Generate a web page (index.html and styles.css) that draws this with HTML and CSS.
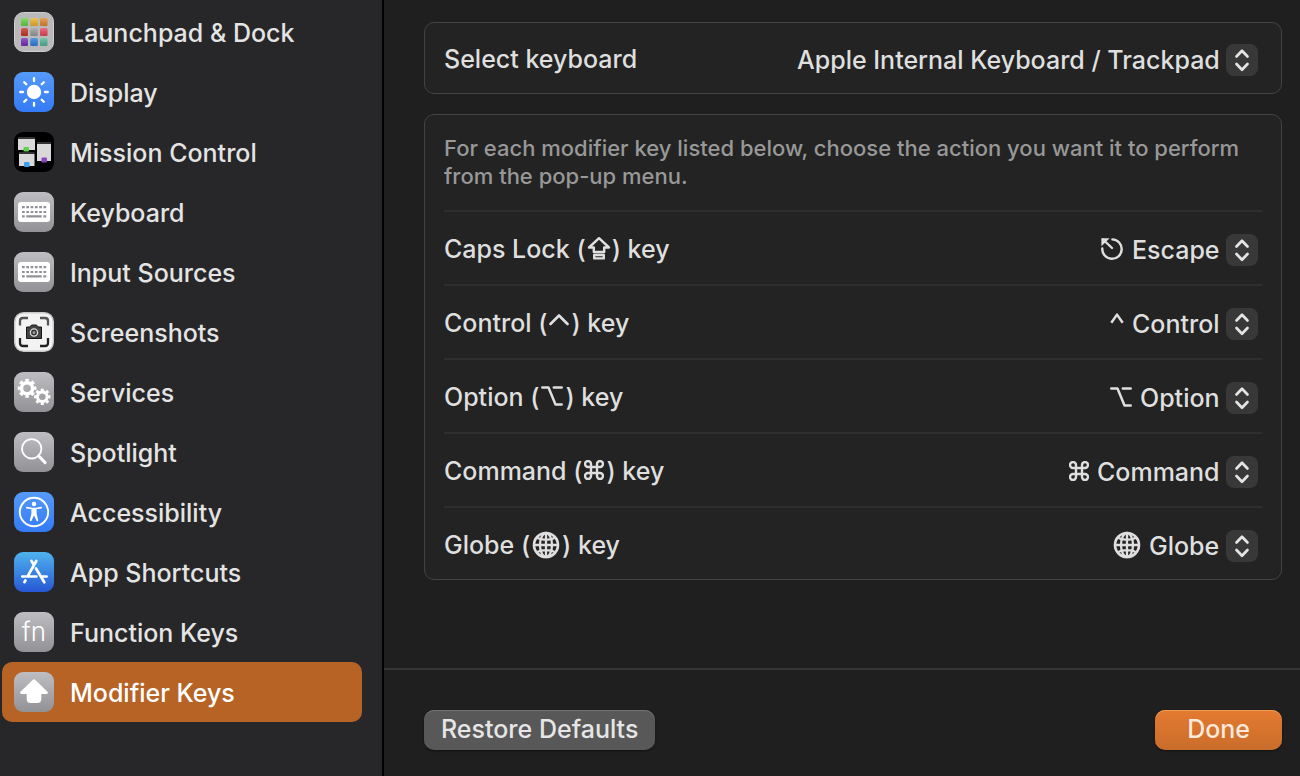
FILE: index.html
```html
<!DOCTYPE html>
<html lang="en">
<head>
<meta charset="utf-8">
<meta name="viewport" content="width=device-width, initial-scale=1">
<title>Modifier Keys</title>
<link rel="stylesheet" href="styles.css">
</head>
<body>
<svg class="defs" width="0" height="0" aria-hidden="true">
  <defs>
    <linearGradient id="g-gray" x1="0" y1="0" x2="0" y2="1"><stop offset="0" stop-color="#bebdc2"/><stop offset="1" stop-color="#929196"/></linearGradient>
    <linearGradient id="g-blue" x1="0" y1="0" x2="0" y2="1"><stop offset="0" stop-color="#559bf8"/><stop offset="1" stop-color="#347af5"/></linearGradient>
    <linearGradient id="g-store" x1="0" y1="0" x2="0" y2="1"><stop offset="0" stop-color="#4fb3ee"/><stop offset="1" stop-color="#2757d4"/></linearGradient>
    <linearGradient id="g-shade" x1="0" y1="0" x2="0" y2="1"><stop offset="0" stop-color="#fff" stop-opacity=".2"/><stop offset="1" stop-color="#000" stop-opacity=".15"/></linearGradient>
    <symbol id="i-updown" viewBox="0 0 32 32"><path d="M10.500 12.500 16 6.800l5.500 5.700M10.500 20l5.500 5.700 5.500-5.700" fill="none" stroke="#e4e4e4" stroke-width="2.700" stroke-linecap="round" stroke-linejoin="round"/></symbol>
    <symbol id="i-option" viewBox="0 0 22 20"><path d="M1.300 1.500h6.200l7 17h6.200M12.800 1.500h7.900" fill="none" stroke="currentColor" stroke-width="2.500" stroke-linecap="round" stroke-linejoin="round"/></symbol>
    <symbol id="i-command" viewBox="2 2 20 20"><path d="M15 6v12a3 3 0 1 0 3-3H6a3 3 0 1 0 3 3V6a3 3 0 1 0-3 3h12a3 3 0 1 0-3-3" fill="none" stroke="currentColor" stroke-width="2.400"/></symbol>
    <symbol id="i-globe" viewBox="0 0 28 28"><g fill="none" stroke="currentColor" stroke-width="2.300"><circle cx="14" cy="14" r="12" stroke-width="2.600"/><ellipse cx="14" cy="14" rx="6" ry="12"/><path d="M14 1.500v25M1.500 14h25M4.200 6.600c5.500 3 14.100 3 19.600 0M4.200 21.400c5.500-3 14.100-3 19.600 0"/></g></symbol>
    <symbol id="i-keyboard" viewBox="0 0 40 40"><rect width="40" height="40" rx="9" fill="url(#g-gray)"/><rect x="4" y="10" width="32" height="20" rx="3" fill="#fff"/><g stroke="#929196" stroke-width="2.200"><path d="M8 15.200h24.400M8 20h24.400" stroke-dasharray="2.700 1.600"/><path d="M8 24.400h2.700M12.300 24.400h15.400M29.300 24.400h3"/></g></symbol>
    <symbol id="i-gear" viewBox="0 0 20 20"><g fill="none" stroke="#fff"><circle cx="10" cy="10" r="5.700" stroke-width="3.600"/><circle cx="10" cy="10" r="8.200" stroke-width="3" pathLength="16" stroke-dasharray="1.100 .9" stroke-dashoffset=".55"/></g></symbol>
  </defs>
</svg>
<div class="window">
  <nav class="sidebar" aria-label="Shortcut categories">
    <a class="item" href="#launchpad">
      <svg class="tile" viewBox="0 0 40 40" aria-hidden="true"><rect x=".5" y=".5" width="39" height="39" rx="9" fill="#b9b9ba" stroke="#cecece"/>
        <g><rect x="7" y="6" width="7" height="8" rx="1.500" fill="#66d548"/><rect x="16.300" y="6" width="7.500" height="8" rx="1.500" fill="#f0b52e"/><rect x="26" y="6" width="7.500" height="8" rx="1.500" fill="#e58931"/><rect x="7" y="16" width="7" height="8" rx="1.500" fill="#cb3528"/><rect x="16.300" y="16" width="7.500" height="8" rx="1.500" fill="#9a9fa3"/><rect x="26" y="16" width="7.500" height="8" rx="1.500" fill="#ea4860"/><rect x="7" y="26" width="7" height="8" rx="1.500" fill="#7930b8"/><rect x="16.300" y="26" width="7.500" height="8" rx="1.500" fill="#2b82e0"/><rect x="26" y="26" width="7.500" height="8" rx="1.500" fill="#56b79b"/></g>
        <path fill="url(#g-shade)" d="M7 6h7v8H7zM16.300 6h7.500v8h-7.500zM26 6h7.500v8H26z"/><path fill="url(#g-shade)" d="M7 16h7v8H7zM16.300 16h7.500v8h-7.500zM26 16h7.500v8H26z"/><path fill="url(#g-shade)" d="M7 26h7v8H7zM16.300 26h7.500v8h-7.500zM26 26h7.500v8H26z"/></svg>
      <span class="item-text">Launchpad &amp; Dock</span></a>
    <a class="item" href="#display">
      <svg class="tile" viewBox="0 0 40 40" aria-hidden="true"><rect width="40" height="40" rx="9" fill="url(#g-blue)"/><circle cx="20" cy="20" r="7.200" fill="#fff"/><path d="M20 6.200v2.800M20 31v2.800M6.200 20H9M31 20h2.800M10.200 10.200l2.100 2.100M27.700 27.700l2.100 2.100M10.200 29.800l2.100-2.100M27.700 12.300l2.100-2.100" stroke="#fff" stroke-width="2.300" stroke-linecap="round"/></svg>
      <span class="item-text">Display</span></a>
    <a class="item" href="#mission-control">
      <svg class="tile" viewBox="0 0 40 40" aria-hidden="true"><rect width="40" height="40" rx="9" fill="#000"/><path d="M4 7h17v11H4zM5 22h15.500v12H5zM23 12h14v17H23z" fill="#d9d9d9"/><path d="M4 6h17M5 21h15.500M23 11h14" stroke="#666"/><rect x="9.500" y="15" width="5.500" height="4.500" rx="1" fill="#5fd04f"/><rect x="10" y="30" width="5.500" height="5" rx="1" fill="#3aa0f0"/><rect x="27.500" y="25.500" width="5.500" height="5" rx="1" fill="#8b45bd"/></svg>
      <span class="item-text">Mission Control</span></a>
    <a class="item" href="#keyboard"><svg class="tile" aria-hidden="true"><use href="#i-keyboard"/></svg><span class="item-text">Keyboard</span></a>
    <a class="item" href="#input-sources"><svg class="tile" aria-hidden="true"><use href="#i-keyboard"/></svg><span class="item-text">Input Sources</span></a>
    <a class="item" href="#screenshots">
      <svg class="tile" viewBox="0 0 40 40" aria-hidden="true"><rect x=".7" y=".7" width="38.600" height="38.600" rx="9" fill="#f3f3f3" stroke="#c9c9c9" stroke-width="1.400"/><path d="M6 13.500V9q0-3 3-3h5M26 6h5q3 0 3 3v4.500" fill="none" stroke="#555" stroke-width="2.300"/><path d="M6 26v5q0 3 3 3h5M26 34h5q3 0 3-3v-5" fill="none" stroke="#222" stroke-width="2.300"/><path d="M12.500 15h3.500l1.500-2h5l1.500 2h3.500v11.500h-15z" fill="#444" stroke="#171717" stroke-linejoin="round"/><circle cx="20" cy="20.500" r="3.600" fill="#333" stroke="#ddd" stroke-width="1.300"/><circle cx="20" cy="20.500" r="1.500" fill="#999"/></svg>
      <span class="item-text">Screenshots</span></a>
    <a class="item" href="#services">
      <svg class="tile" viewBox="0 0 40 40" aria-hidden="true"><rect width="40" height="40" rx="9" fill="url(#g-gray)"/><use href="#i-gear" x="3.300" y="6.500" width="19.500" height="19.500"/><use href="#i-gear" x="19.800" y="16.200" width="17" height="17"/></svg>
      <span class="item-text">Services</span></a>
    <a class="item" href="#spotlight">
      <svg class="tile" viewBox="0 0 40 40" aria-hidden="true"><rect width="40" height="40" rx="9" fill="url(#g-gray)"/><circle cx="17.700" cy="16.800" r="9.700" fill="none" stroke="#fff" stroke-width="1.800"/><path d="m24.700 24 6.300 6.500" stroke="#fff" stroke-width="3.200" stroke-linecap="round"/></svg>
      <span class="item-text">Spotlight</span></a>
    <a class="item" href="#accessibility">
      <svg class="tile" viewBox="0 0 40 40" aria-hidden="true"><rect width="40" height="40" rx="9" fill="url(#g-blue)"/><circle cx="20" cy="20" r="14.200" fill="none" stroke="#fff" stroke-width="1.900"/><circle cx="20" cy="12" r="2.200" fill="#fff"/><path d="M12.800 15.600 18 16.500h4l5.200-.9" fill="none" stroke="#fff" stroke-width="1.600" stroke-linecap="round" stroke-linejoin="round"/><path d="M17.400 16h5.200v5.500l1.600 7q-.4 1.300-1.500.5L20 23.600 17.300 29q-1.100.8-1.500-.5l1.600-7z" fill="#fff"/></svg>
      <span class="item-text">Accessibility</span></a>
    <a class="item" href="#app-shortcuts">
      <svg class="tile" viewBox="0 0 40 40" aria-hidden="true"><rect width="40" height="40" rx="9" fill="url(#g-store)"/><g fill="none" stroke="#fff" stroke-width="2.700" stroke-linecap="round"><path d="M22.300 9 14 23.600M17.500 9l2.400 4.200M22 16.500l8.300 13.800M8.200 24.500h14.200M28 24.500h4.600M11.400 28.500l-1 1.700"/></g></svg>
      <span class="item-text">App Shortcuts</span></a>
    <a class="item" href="#function-keys"><span class="tile tile-fn" aria-hidden="true">fn</span><span class="item-text">Function Keys</span></a>
    <a class="item item-current" href="#modifier-keys" aria-current="page">
      <svg class="tile" viewBox="0 0 40 40" aria-hidden="true"><rect width="40" height="40" rx="9" fill="url(#g-gray)"/><path d="M20 8.500 32.600 20.600H26V27q0 2.600-2.600 2.600h-6.800Q14 29.600 14 27v-6.400H7.400z" fill="#fff" stroke="#fff" stroke-width="2.600" stroke-linejoin="round"/></svg>
      <span class="item-text">Modifier Keys</span></a>
  </nav>
  <main class="main">
    <form class="panel">
      <div class="content">
        <section class="card">
          <div class="row">
            <label for="kb">Select keyboard</label>
            <span class="popup"><select id="kb"><option>Apple Internal Keyboard / Trackpad</option></select><svg class="stepper" aria-hidden="true"><use href="#i-updown"/></svg></span>
          </div>
        </section>
        <section class="card">
          <p class="hint">For each modifier key listed below, choose the action you want it to perform from the pop-up menu.</p>
          <div class="row row-ruled">
            <label for="caps">Caps Lock (<svg class="glyph glyph-caps" viewBox="0 0 24 24" aria-hidden="true"><path d="M12 2.200 22 11.500h-4.800V16H6.800v-4.500H2zM7.200 19h9.600v3.400H7.200z" fill="none" stroke="currentColor" stroke-width="2.400" stroke-linejoin="round"/></svg>) key</label>
            <span class="value"><svg class="glyph-escape" viewBox="0 0 24 24" aria-hidden="true"><g fill="none" stroke="currentColor" stroke-width="2.400" stroke-linecap="round" stroke-linejoin="round"><path d="M12.400 2.400A9.700 9.700 0 1 1 2.300 11.500M3 2.500l9 8.500"/></g><path d="M1.400 1.200h8.200L1.400 9.300z" fill="currentColor"/></svg><span class="popup"><select id="caps"><option>Escape</option></select><svg class="stepper" aria-hidden="true"><use href="#i-updown"/></svg></span></span>
          </div>
          <div class="row row-ruled">
            <label for="ctrl">Control (<svg class="glyph glyph-caret" viewBox="0 0 20 20" aria-hidden="true"><path d="m1.500 12 8.500-8.500 8.500 8.500" fill="none" stroke="currentColor" stroke-width="2.600" stroke-linecap="round" stroke-linejoin="round"/></svg>) key</label>
            <span class="value"><svg class="glyph-control" viewBox="0 0 14 20" aria-hidden="true"><path d="M1.300 9.800 7 1.600l5.700 8.200" fill="none" stroke="currentColor" stroke-width="2.500" stroke-linejoin="round"/></svg><span class="popup"><select id="ctrl"><option>Control</option></select><svg class="stepper" aria-hidden="true"><use href="#i-updown"/></svg></span></span>
          </div>
          <div class="row row-ruled">
            <label for="opt">Option (<svg class="glyph glyph-option" aria-hidden="true"><use href="#i-option"/></svg>) key</label>
            <span class="value"><svg class="glyph-option" aria-hidden="true"><use href="#i-option"/></svg><span class="popup"><select id="opt"><option>Option</option></select><svg class="stepper" aria-hidden="true"><use href="#i-updown"/></svg></span></span>
          </div>
          <div class="row row-ruled">
            <label for="cmd">Command (<svg class="glyph glyph-command" aria-hidden="true"><use href="#i-command"/></svg>) key</label>
            <span class="value"><svg class="glyph-command" aria-hidden="true"><use href="#i-command"/></svg><span class="popup"><select id="cmd"><option>Command</option></select><svg class="stepper" aria-hidden="true"><use href="#i-updown"/></svg></span></span>
          </div>
          <div class="row row-ruled">
            <label for="globe">Globe (<svg class="glyph glyph-globe" aria-hidden="true"><use href="#i-globe"/></svg>) key</label>
            <span class="value"><svg class="glyph-globe" aria-hidden="true"><use href="#i-globe"/></svg><span class="popup"><select id="globe"><option>Globe</option></select><svg class="stepper" aria-hidden="true"><use href="#i-updown"/></svg></span></span>
          </div>
        </section>
      </div>
      <footer class="footer">
        <button class="btn" type="reset">Restore Defaults</button>
        <button class="btn btn-primary" type="submit">Done</button>
      </footer>
    </form>
  </main>
</div>
</body>
</html>
```
FILE: styles.css
```css
* {
  box-sizing: border-box;
}

body {
  margin: 0;
  background: #1f1f1f;
  color: #dfdfdf;
  font: 500 25px/32px Inter, "Liberation Sans", sans-serif;
}

.defs {
  position: absolute;
}

.window {
  display: flex;
  min-height: 100vh;
}

.sidebar {
  flex: none;
  width: 384px;
  padding: 2px 20px 2px 2px;
  border-right: 2px solid #000;
  background: #272729;
}

.item {
  display: flex;
  align-items: center;
  gap: 16px;
  height: 60px;
  padding: 0 12px;
  border-radius: 10px;
  color: #e4e4e4;
  text-decoration: none;
}

.item-text {
  padding-top: 2px;
}

.item-current {
  background: #b76326;
  color: #fff;
}

.tile {
  flex: none;
  width: 40px;
  height: 40px;
}

.tile-fn {
  border-radius: 9px;
  background: linear-gradient(#bebdc2, #929196);
  color: #fff;
  font-size: 26px;
  font-weight: 300;
  line-height: 40px;
  text-align: center;
}

.main {
  flex: 1;
  min-width: 0;
}

.panel {
  display: flex;
  flex-direction: column;
  min-height: 100%;
}

.content {
  flex: 1;
  display: flex;
  flex-direction: column;
  gap: 20px;
  padding: 22px 18px 22px 40px;
}

.card {
  padding: 0 19px;
  border: 1px solid #434343;
  border-radius: 10px;
  background: #232323;
}

.row {
  display: flex;
  align-items: center;
  justify-content: space-between;
  gap: 16px;
  min-height: 70px;
  padding: 4px 4px 0 0;
}

.row label {
  padding-bottom: 2px;
}

.row-ruled {
  min-height: 74px;
  border-top: 2px solid #2e2e2e;
}

.row-ruled:last-child {
  min-height: 73px;
}

.hint {
  margin: 0;
  padding: 19px 0 20px;
  color: #989898;
  font-size: 22px;
  line-height: 28px;
}

.value {
  display: flex;
  align-items: center;
  gap: 8px;
}

.value > svg {
  margin-bottom: 2px;
}

.popup {
  display: grid;
  align-items: center;
  justify-items: end;
}

.popup select,
.stepper {
  grid-area: 1 / 1;
}

.popup select {
  appearance: none;
  height: 32px;
  margin: 0;
  padding: 0 38px 3px 0;
  border: 0;
  background: none;
  color: inherit;
  font: inherit;
}

.stepper {
  width: 32px;
  height: 32px;
  border-radius: 8px;
  background: #383838;
  pointer-events: none;
}

.glyph {
  margin: 0 2px;
  vertical-align: 0;
}

.glyph-caps,
.glyph-escape {
  width: 24px;
  height: 24px;
}

.glyph.glyph-caps {
  margin: 0 1px;
  vertical-align: -2px;
}

.glyph-caret {
  width: 20px;
  height: 20px;
}

.glyph-control {
  width: 14px;
  height: 20px;
}

.glyph-option {
  width: 22px;
  height: 20px;
}

.glyph-command {
  width: 20px;
  height: 20px;
}

.glyph-globe {
  width: 28px;
  height: 28px;
}

.glyph.glyph-globe {
  vertical-align: -5px;
}

.footer {
  display: flex;
  align-items: center;
  justify-content: space-between;
  padding: 40px 18px 26px 40px;
  border-top: 2px solid #363636;
}

.btn {
  height: 40px;
  padding: 0 17px 2px;
  border: 0;
  border-radius: 10px;
  background: #585858;
  box-shadow: inset 0 1px #747474, 0 1px 2px #111;
  color: #e6e6e6;
  font: inherit;
}

.btn-primary {
  padding: 0 32px 2px;
  background: linear-gradient(#e47a30, #c96d2b);
  box-shadow: inset 0 1px #ee9a50, 0 1px 2px #111;
  color: #fbe9dd;
}
```
